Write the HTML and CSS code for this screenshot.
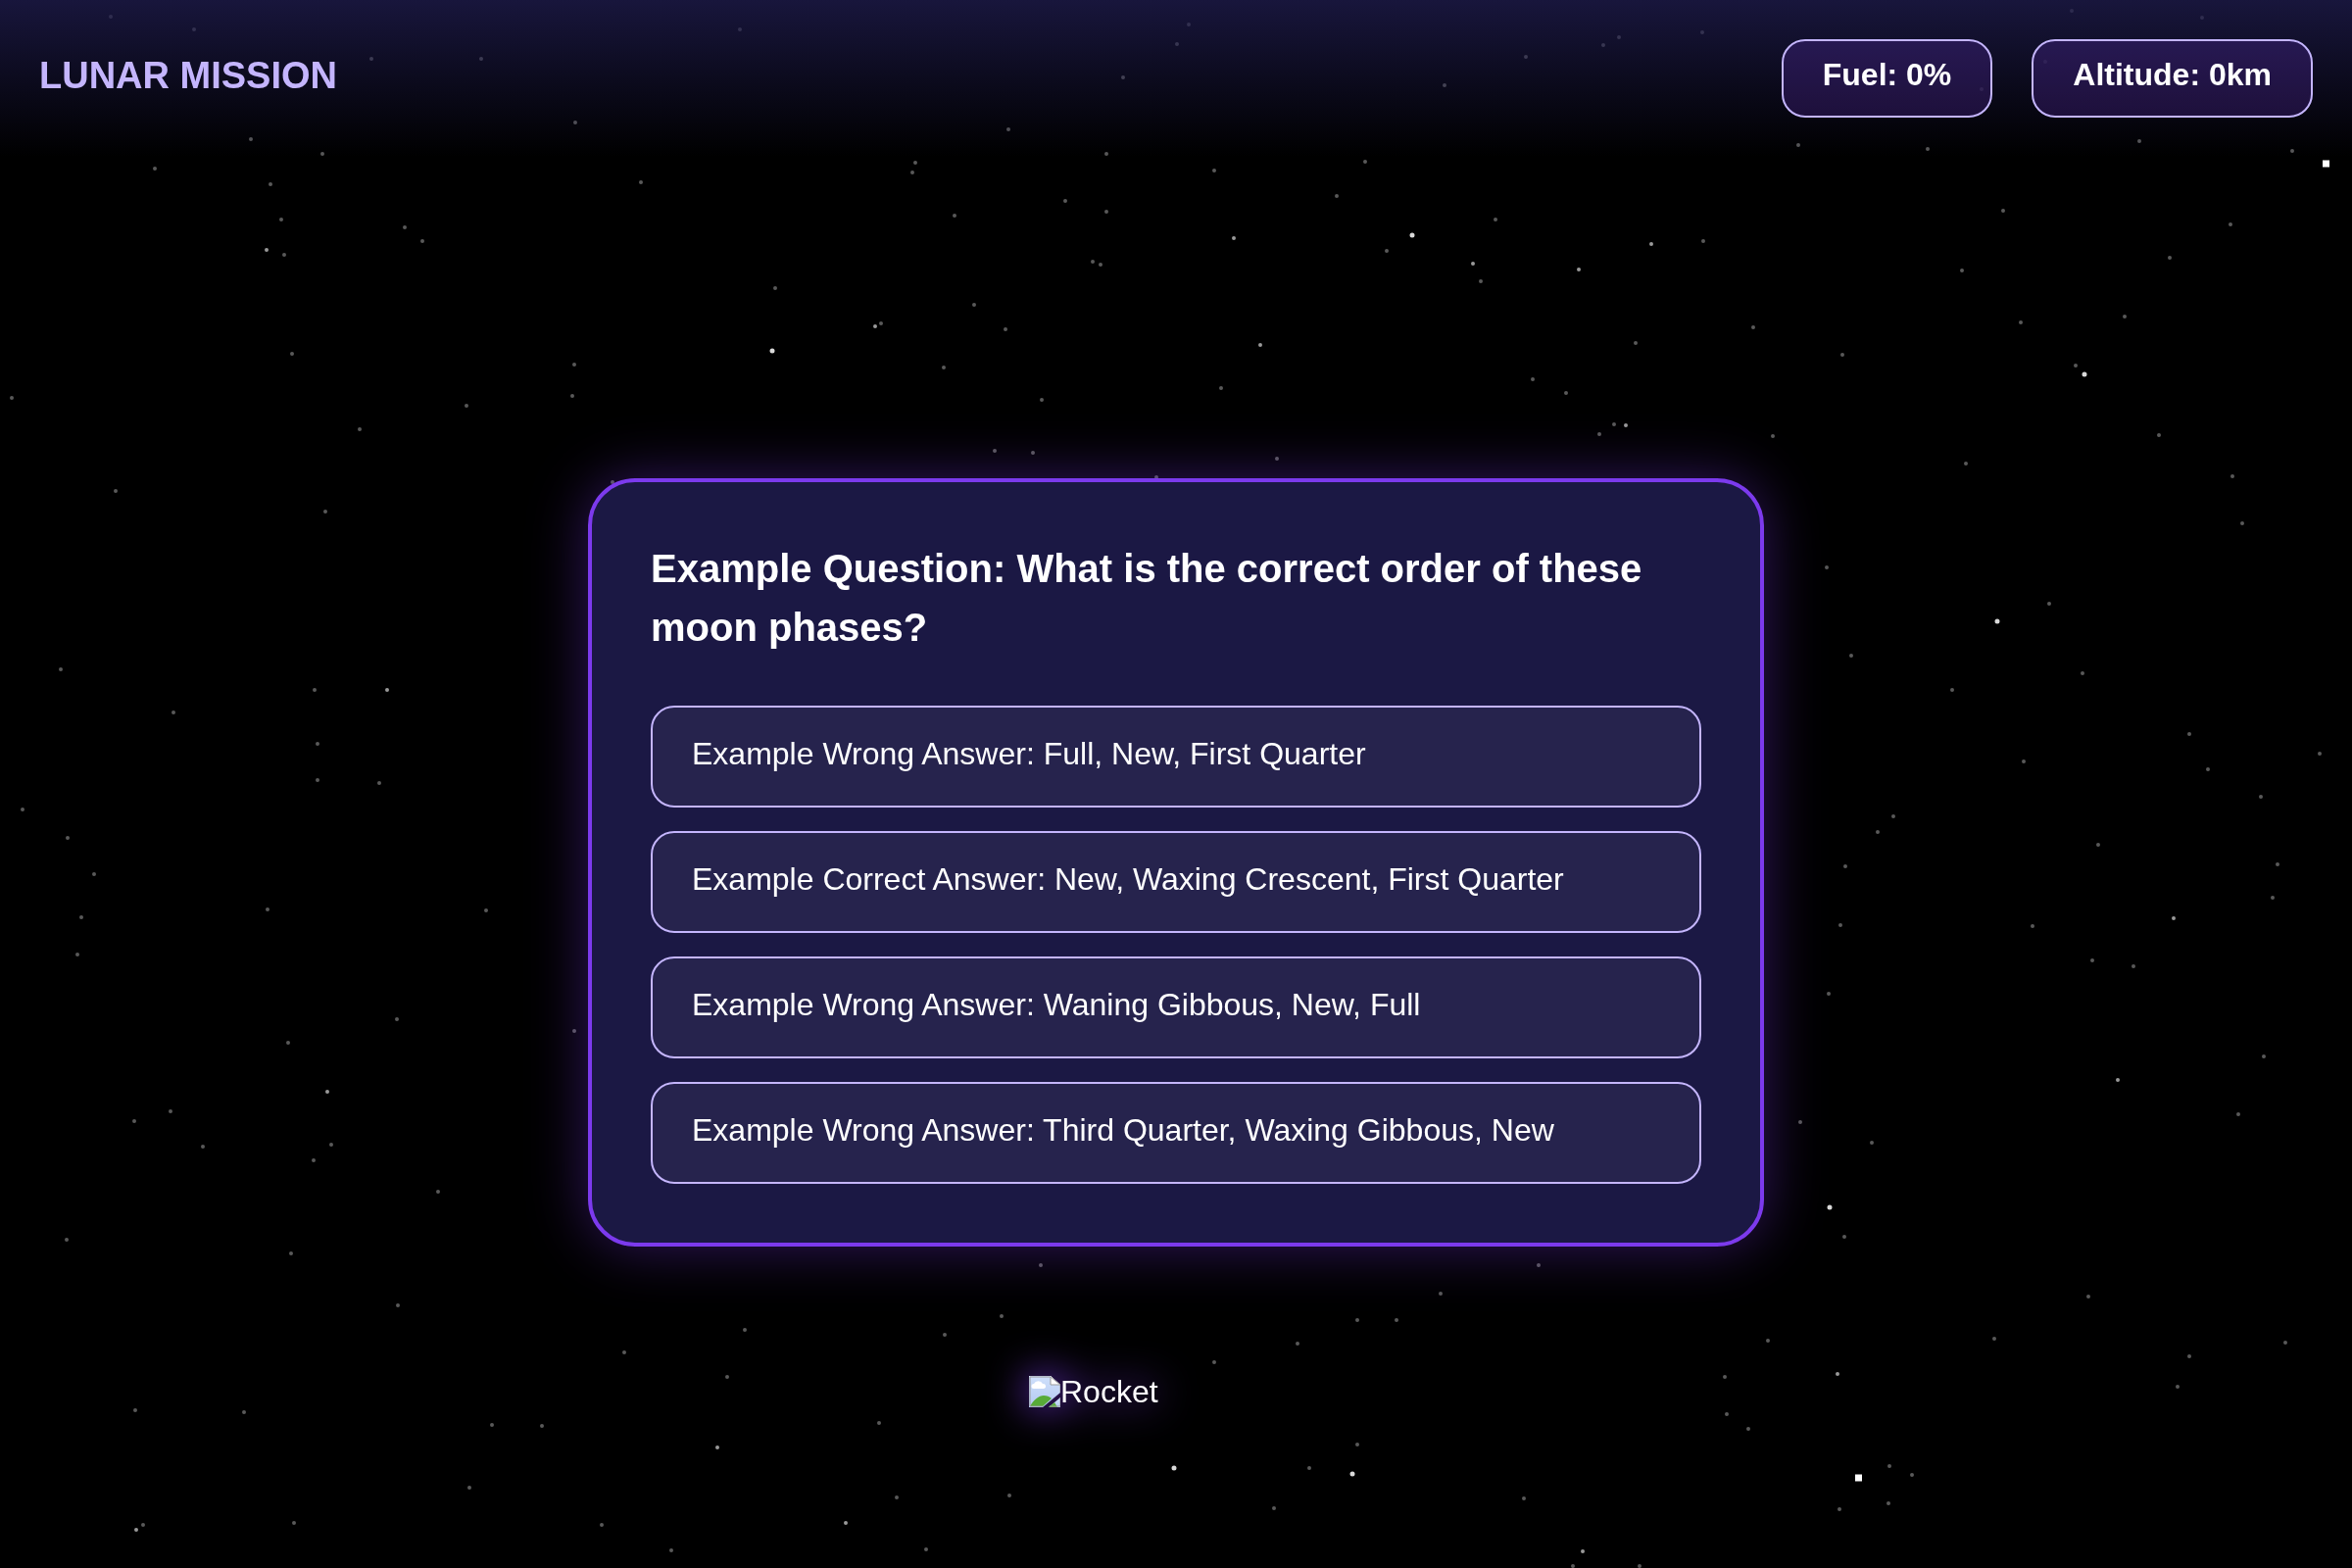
FILE: index.html
```html
<!DOCTYPE html>
<html lang="en">
<head>
<meta charset="utf-8">
<meta name="viewport" content="width=device-width, initial-scale=1">
<title>Lunar Mission</title>
<link rel="stylesheet" href="styles.css">
</head>
<body>
<svg class="stars" viewBox="0 0 2400 1600" preserveAspectRatio="xMidYMid slice" aria-hidden="true">
<path class="star-dim" d="M113 17h0M198 30h0M379 60h0M491 60h0M755 30h0M256 142h0M329 157h0M158 172h0M276 188h0M287 224h0M290 260h0M413 232h0M431 246h0M587 125h0M654 186h0M791 294h0M298 361h0M586 372h0M584 404h0M476 414h0M367 438h0M12 406h0M118 501h0M332 522h0M625 492h0
M1213 25h0M1201 45h0M1146 79h0M1557 58h0M1474 87h0M1029 132h0M934 166h0M931 176h0M1129 157h0M1239 174h0M1393 165h0M1364 200h0M1087 205h0M1129 216h0M974 220h0M1415 256h0M1526 224h0M1511 287h0M1115 267h0M1123 270h0M994 311h0M1026 336h0M899 330h0M963 375h0M1063 408h0M1246 396h0M1564 387h0M1598 401h0M1015 460h0M1054 462h0M1303 468h0M1180 487h0
M2114 11h0M2247 18h0M1652 38h0M1636 46h0M1737 33h0M1835 148h0M1967 152h0M2183 144h0M2339 154h0M2044 215h0M2276 229h0M1738 246h0M2214 263h0M2002 276h0M2062 329h0M2168 323h0M1789 334h0M1669 350h0M1880 362h0M2118 373h0M1647 433h0M1632 443h0M1809 445h0M2203 444h0M2006 473h0M2278 486h0M2288 534h0
M62 683h0M321 704h0M177 727h0M324 759h0M324 796h0M387 799h0M23 826h0M69 855h0M96 892h0M273 928h0M496 929h0M83 936h0M79 974h0M405 1040h0M294 1064h0M586 1052h0
M1864 579h0M2091 616h0M1889 669h0M2125 687h0M1992 704h0M2234 749h0M2367 769h0M2065 777h0M2253 785h0M2307 813h0M1932 833h0M1916 849h0M2141 862h0M1883 884h0M2324 882h0M2319 916h0M1878 944h0M2074 945h0M2135 980h0M2177 986h0M1866 1014h0
M174 1134h0M137 1144h0M207 1170h0M338 1168h0M320 1184h0M447 1216h0M68 1265h0M297 1279h0M406 1332h0M760 1357h0M637 1380h0M742 1405h0M138 1439h0M249 1441h0M502 1454h0M553 1455h0M479 1518h0M146 1556h0M300 1554h0M614 1556h0M685 1582h0
M1062 1291h0M1570 1291h0M1470 1320h0M1022 1343h0M964 1362h0M1385 1347h0M1425 1347h0M1324 1371h0M1239 1390h0M897 1452h0M1385 1474h0M1336 1498h0M915 1528h0M1030 1526h0M1300 1539h0M1555 1529h0M945 1581h0
M2310 1078h0M2284 1137h0M1837 1145h0M1910 1166h0M1882 1262h0M2131 1323h0M1804 1368h0M2035 1366h0M2332 1370h0M2234 1384h0M1760 1405h0M2222 1415h0M1762 1443h0M1784 1458h0M1928 1496h0M1951 1505h0M1927 1534h0M1877 1540h0M1605 1598h0M1673 1598h0"/>
<path class="star-faint" d="M2022 91h0M2087 63h0"/>
<path class="star-mid" d="M272 255h0M1259 243h0M1503 269h0M893 333h0M1286 352h0M1685 249h0M1611 275h0M1659 434h0M395 704h0M2218 937h0M334 1114h0M732 1477h0M139 1561h0M863 1554h0M2161 1102h0M1875 1402h0M1615 1583h0"/>
<path class="star-bright" d="M788 358h0M1441 240h0M2127 382h0M2038 634h0M1198 1498h0M1380 1504h0M1867 1232h0"/>
<path class="star-near" d="M2370 167h7M1893 1508h7"/>
</svg>

<header class="hud">
  <h1 class="title">LUNAR MISSION</h1>
  <div class="stats">
    <div class="stat">Fuel: 0%</div>
    <div class="stat">Altitude: 0km</div>
  </div>
</header>

<main class="stage">
  <section class="quiz" aria-labelledby="question">
    <h2 class="question" id="question">Example Question: What is the correct order of these moon phases?</h2>
    <div class="answers">
      <button class="answer" type="button">Example Wrong Answer: Full, New, First Quarter</button>
      <button class="answer" type="button">Example Correct Answer: New, Waxing Crescent, First Quarter</button>
      <button class="answer" type="button">Example Wrong Answer: Waning Gibbous, New, Full</button>
      <button class="answer" type="button">Example Wrong Answer: Third Quarter, Waxing Gibbous, New</button>
    </div>
  </section>
</main>

<div class="rocket">
  <svg class="rocket-icon" viewBox="0 0 32 32" aria-hidden="true">
    <defs>
      <linearGradient id="sky" x1="0" y1="0" x2="0" y2="1">
        <stop offset="0" stop-color="#cfe0fb"/>
        <stop offset="1" stop-color="#b4c9f1"/>
      </linearGradient>
    </defs>
    <path fill="url(#sky)" d="M0 0h22l10 9v8L14 32H0z"/>
    <path fill="#fff" d="M5 13a2 2 0 0 1 0-5a5 5 0 0 1 9 0a2 2 0 0 1 1 5z"/>
    <path fill="#58ab38" d="M1 31C5 24 10 20 15 20c3 0 6 1 8 3l-9 8z"/>
    <path fill="url(#sky)" d="M32 22v10H20z"/>
    <path fill="#58ab38" d="M20 32l6-5 3 5z"/>
    <path fill="#fff" d="M22 0v9h10z"/>
    <path fill="none" stroke="#999" d="M14 31H1V1h21l10 8M22 1v8h10v8M32 22v9H21"/>
  </svg>
  <span>Rocket</span>
</div>
</body>
</html>
```
FILE: styles.css
```css
* {
  box-sizing: border-box;
}

body {
  margin: 0;
  min-height: 100vh;
  display: flex;
  flex-direction: column;
  background: #000;
  color: #fff;
  font-family: "Liberation Sans", Arial, sans-serif;
  font-size: 32px;
  line-height: 48px;
}

/* Star field behind everything */
.stars {
  position: fixed;
  inset: 0;
  z-index: -1;
  width: 100%;
  height: 100%;
  fill: none;
  stroke: #fff;
  stroke-linecap: round;
}

.star-dim {
  stroke-width: 4px;
  stroke-opacity: 0.35;
}

.star-faint {
  stroke-width: 4px;
  stroke-opacity: 0.12;
}

.star-mid {
  stroke-width: 4px;
  stroke-opacity: 0.6;
}

.star-bright {
  stroke-width: 5px;
  stroke-opacity: 0.85;
}

.star-near {
  stroke-width: 7px;
  stroke-linecap: butt;
}

/* Top bar */
.hud {
  display: flex;
  justify-content: space-between;
  align-items: center;
  padding: 40px;
  background: linear-gradient(to bottom, rgba(30, 27, 75, 0.8), transparent);
}

.title {
  margin: 0;
  padding-bottom: 6px;
  color: #c4b5fd;
  font-size: 38px;
  font-weight: 700;
}

.stats {
  display: flex;
  gap: 40px;
}

.stat {
  padding: 10px 40px 18px;
  border: 2px solid #c4b5fd;
  border-radius: 24px;
  background: rgba(124, 58, 237, 0.2);
  font-weight: 700;
}

/* Quiz card */
.stage {
  flex: 1;
  display: flex;
  justify-content: center;
  align-items: center;
}

.quiz {
  width: 100%;
  max-width: 1200px;
  padding: 58px 60px 60px;
  border: 4px solid #7c3aed;
  border-radius: 48px;
  background: rgba(30, 27, 75, 0.9);
  box-shadow: 0 0 60px rgba(124, 58, 237, 0.4);
}

.question {
  margin: 0 0 50px;
  font-size: 40px;
  line-height: 60px;
}

.answers {
  display: flex;
  flex-direction: column;
  gap: 24px;
}

.answer {
  padding: 23px 40px 29px;
  border: 2px solid #c4b5fd;
  border-radius: 24px;
  background: rgba(255, 255, 255, 0.05);
  color: inherit;
  font: inherit;
  text-align: left;
  cursor: pointer;
}

/* Rocket hovering over the lower part of the scene */
.rocket {
  position: fixed;
  bottom: 160px;
  left: calc(50% - 150px);
  width: 300px;
  display: flex;
  align-items: center;
  line-height: 40px;
  filter: drop-shadow(0 0 20px #7c3aed);
}

.rocket-icon {
  width: 32px;
  height: 32px;
}
```
